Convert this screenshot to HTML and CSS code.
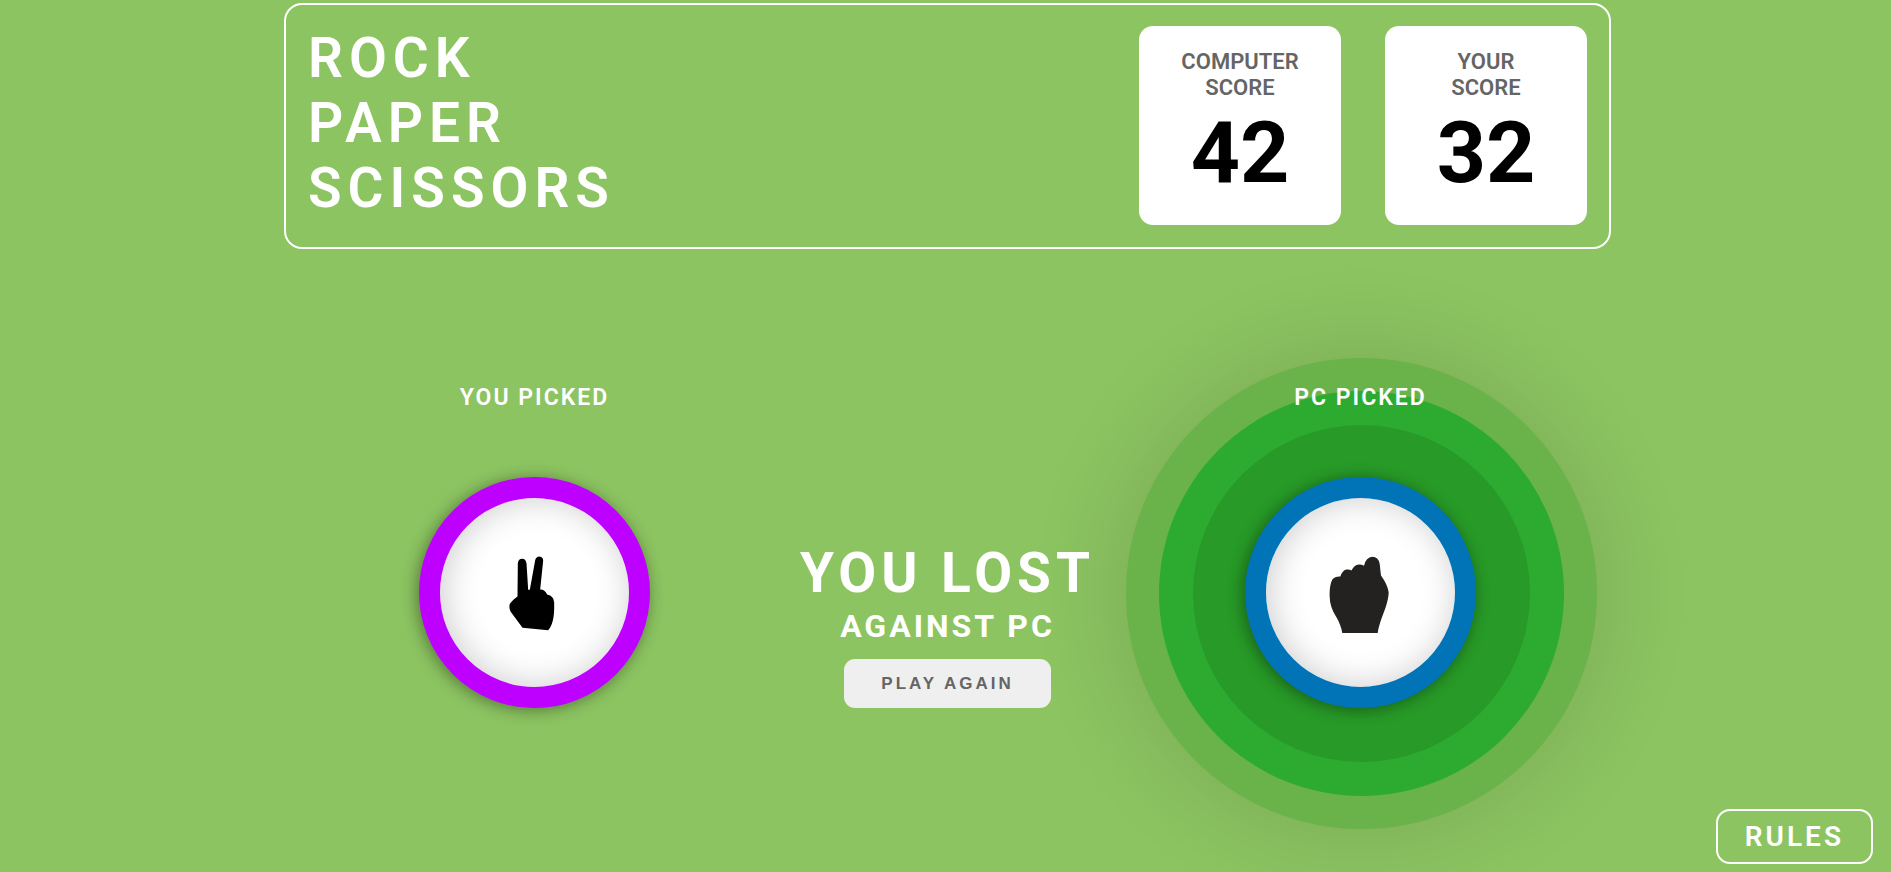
FILE: index.html
```html
<!DOCTYPE html>
<html lang="en">
<head>
<meta charset="utf-8">
<meta name="viewport" content="width=device-width, initial-scale=1">
<title>Rock Paper Scissors</title>
<link rel="stylesheet" href="styles.css">
</head>
<body>
<header class="scoreboard">
  <h1 class="title">ROCK<br>PAPER<br>SCISSORS</h1>
  <div class="scores">
    <section class="score-card">
      <h2 class="score-label">COMPUTER<br>SCORE</h2>
      <p class="score-value">42</p>
    </section>
    <section class="score-card">
      <h2 class="score-label">YOUR<br>SCORE</h2>
      <p class="score-value">32</p>
    </section>
  </div>
</header>
<main class="round">
  <section class="pick">
    <h2 class="pick-label">YOU PICKED</h2>
    <div class="token token-scissors">
      <svg class="hand" viewBox="13.5 37.5 240 240" role="img" aria-label="Scissors">
        <path fill="#000" d="M81 168L82 68Q84 55 95 55Q105 55 108 68L113 148H118L134 59Q137 48 147 48Q158 49 158 61L149 147Q162 146 170 162Q190 167 191 185Q192 220 187 240Q182 260 173 269L96 262L60 213Q55 203 57 193Q64 179 81 168Z"/>
      </svg>
    </div>
  </section>
  <section class="result">
    <h2 class="result-title">YOU LOST</h2>
    <p class="result-sub">AGAINST PC</p>
    <button class="play-again" type="button">PLAY AGAIN</button>
  </section>
  <section class="pick">
    <h2 class="pick-label">PC PICKED</h2>
    <div class="token token-rock winner">
      <svg class="hand" viewBox="33 37.5 240 240" role="img" aria-label="Rock">
        <path fill="#232220" d="M100 278C97 260 91 245 81 228C69 209 62 190 62 168C61 147 64 128 70 117Q78 107 94 108Q101 88 113 87Q123 86 127 90Q137 72 149 72Q160 72 165 76Q171 50 190 49Q208 49 212 70Q214 89 216 105Q236 133 239 155Q239 172 230 200C219 230 209 255 206 278Z"/>
      </svg>
    </div>
  </section>
</main>
<footer class="footer">
  <button class="rules" type="button">RULES</button>
</footer>
</body>
</html>
```
FILE: styles.css
```css
* {
  box-sizing: border-box;
  margin: 0;
  padding: 0;
}

body {
  display: flex;
  flex-direction: column;
  min-height: 100vh;
  overflow-x: hidden;
  background: #8cc461;
  color: #fff;
  font-family: Roboto, sans-serif;
}

.scoreboard {
  display: flex;
  justify-content: space-between;
  align-items: flex-start;
  margin: 3px 280px 0 284px;
  padding: 21px 22px 22px;
  border: 2px solid #fff;
  border-radius: 18px;
}

.title {
  font-size: 55px;
  font-weight: 600;
  line-height: 65px;
  letter-spacing: 6px;
}

.scores {
  display: flex;
  gap: 44px;
}

.score-card {
  width: 202px;
  padding: 23px 20px 20px;
  border-radius: 14px;
  background: #fff;
  text-align: center;
}

.score-label {
  color: #656565;
  font-size: 22px;
  font-weight: 600;
  line-height: 26px;
}

.score-value {
  color: #000;
  font-size: 86px;
  font-weight: 700;
  line-height: 104px;
}

.round {
  display: flex;
  justify-content: space-between;
  align-items: flex-end;
  margin: 136px 280px 0 284px;
  padding: 0 135px;
}

.pick {
  display: flex;
  flex-direction: column;
  align-items: center;
  gap: 66px;
}

.pick-label {
  position: relative;
  z-index: 1;
  font-size: 23px;
  font-weight: 600;
  line-height: 26px;
  letter-spacing: 2px;
}

.token {
  position: relative;
  display: flex;
  justify-content: center;
  align-items: center;
  width: 231px;
  height: 231px;
  border: 21px solid;
  border-radius: 50%;
  background: #fff;
  box-shadow: -2px 2px 16px rgba(0, 0, 0, 0.4), inset 3px 0 34px rgba(0, 0, 0, 0.2);
}

.token-scissors {
  border-color: #bd00ff;
}

.token-rock {
  border-color: #0074b6;
}

.winner {
  box-shadow:
    -2px 2px 16px rgba(0, 0, 0, 0.4),
    1px 1px 0 53px #279a27,
    1px 1px 0 87px #2dab31,
    1px 1px 0 120px #69b34a,
    0 0 100px 120px rgba(0, 0, 0, 0.14),
    inset 3px 0 34px rgba(0, 0, 0, 0.2);
}

.hand {
  width: 80px;
  height: 80px;
}

.result {
  position: relative;
  z-index: 1;
  display: flex;
  flex-direction: column;
  align-items: center;
}

.result-title {
  font-size: 55px;
  font-weight: 700;
  line-height: 65px;
  letter-spacing: 5px;
}

.result-sub {
  margin-bottom: 13px;
  font-size: 32px;
  font-weight: 700;
  line-height: 40px;
  letter-spacing: 3px;
}

.play-again {
  height: 49px;
  padding: 0 37px;
  border: 0;
  border-radius: 11px;
  background: #efefef;
  color: #656565;
  font-family: "Liberation Sans", Arial, sans-serif;
  font-size: 17px;
  font-weight: 700;
  letter-spacing: 3px;
}

.footer {
  display: flex;
  justify-content: flex-end;
  margin-top: auto;
  padding: 0 18px 8px;
}

.rules {
  height: 55px;
  padding: 0 27px;
  border: 2px solid #fff;
  border-radius: 14px;
  background: transparent;
  color: #fff;
  font-family: inherit;
  font-size: 28px;
  font-weight: 600;
  letter-spacing: 3px;
}
```
